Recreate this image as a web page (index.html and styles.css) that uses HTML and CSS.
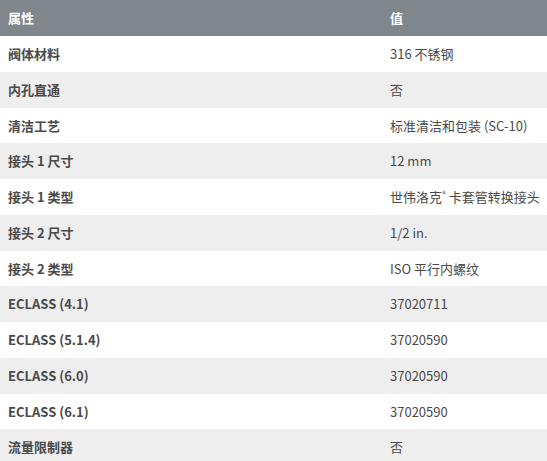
FILE: index.html
```html
<!DOCTYPE html>
<html lang="zh-CN">
<head>
<meta charset="utf-8">
<link rel="stylesheet" href="styles.css">
</head>
<body>
<table class="spec">
  <thead>
    <tr><th class="k">属性</th><th class="v">值</th></tr>
  </thead>
  <tbody>
    <tr><td class="k">阀体材料</td><td class="v">316 不锈钢</td></tr>
    <tr><td class="k">内孔直通</td><td class="v">否</td></tr>
    <tr><td class="k">清洁工艺</td><td class="v">标准清洁和包装 (SC-10)</td></tr>
    <tr><td class="k">接头 1 尺寸</td><td class="v">12 mm</td></tr>
    <tr><td class="k">接头 1 类型</td><td class="v">世伟洛克<sup>®</sup> 卡套管转换接头</td></tr>
    <tr><td class="k">接头 2 尺寸</td><td class="v">1/2 in.</td></tr>
    <tr><td class="k">接头 2 类型</td><td class="v">ISO 平行内螺纹</td></tr>
    <tr><td class="k">ECLASS (4.1)</td><td class="v">37020711</td></tr>
    <tr><td class="k">ECLASS (5.1.4)</td><td class="v">37020590</td></tr>
    <tr><td class="k">ECLASS (6.0)</td><td class="v">37020590</td></tr>
    <tr><td class="k">ECLASS (6.1)</td><td class="v">37020590</td></tr>
    <tr><td class="k">流量限制器</td><td class="v">否</td></tr>
  </tbody>
</table>
</body>
</html>
```
FILE: styles.css
```css
html, body {
  margin: 0;
  padding: 0;
  background: #ffffff;
}
body {
  font-family: "Noto Sans CJK SC", "Noto Sans", sans-serif;
  font-size: 13px;
  color: #4a4a4a;
}
.spec {
  width: 100%;
  border-collapse: collapse;
  table-layout: fixed;
}
.spec th,
.spec td {
  text-align: left;
  vertical-align: middle;
  padding: 8px 8px;
  line-height: 19.75px;
  white-space: nowrap;
}
.spec th {
  background: #7f878d;
  color: #ffffff;
  font-weight: 700;
  padding-top: 8px;
  padding-bottom: 8px;
  line-height: 20px;
}
.spec .k {
  width: 366px;
}
.spec td.k {
  font-weight: 700;
}
.spec td.v {
  font-weight: 400;
}
.spec tbody tr:nth-child(even) td {
  background: #eeeeee;
}
.spec sup {
  font-size: 8px;
  line-height: 0;
  vertical-align: 5px;
}
```
